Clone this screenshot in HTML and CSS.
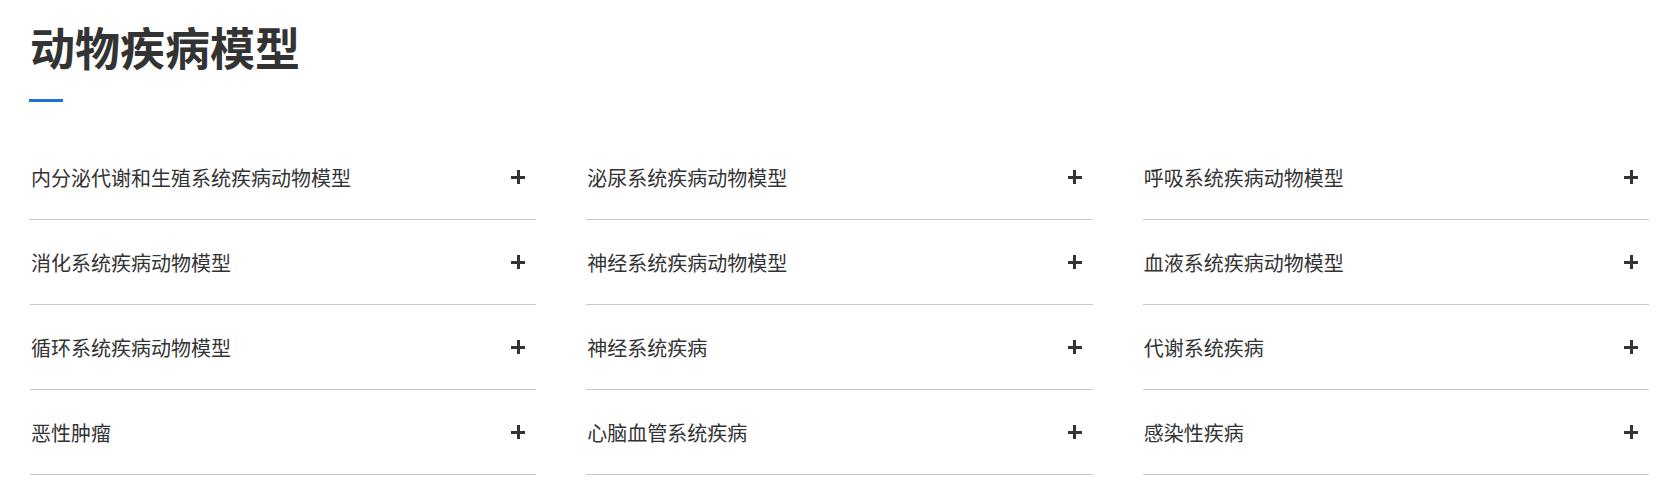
FILE: index.html
```html
<!DOCTYPE HTML>
<html>
	<head>
		<title>动物疾病模型</title>
		<meta charset="utf-8" />
		<meta name="viewport" content="width=device-width, initial-scale=1" />
		<link rel="stylesheet" href="styles.css">
	</head>
	<body>
		<div class="section">
			<h2 class="section-title">动物疾病模型</h2>
			<div class="title-bar"></div>

			<div class="model-list">
				<div class="model-item"><span>内分泌代谢和生殖系统疾病动物模型</span><i class="plus"></i></div>
				<div class="model-item"><span>泌尿系统疾病动物模型</span><i class="plus"></i></div>
				<div class="model-item"><span>呼吸系统疾病动物模型</span><i class="plus"></i></div>

				<div class="model-item"><span>消化系统疾病动物模型</span><i class="plus"></i></div>
				<div class="model-item"><span>神经系统疾病动物模型</span><i class="plus"></i></div>
				<div class="model-item"><span>血液系统疾病动物模型</span><i class="plus"></i></div>

				<div class="model-item"><span>循环系统疾病动物模型</span><i class="plus"></i></div>
				<div class="model-item"><span>神经系统疾病</span><i class="plus"></i></div>
				<div class="model-item"><span>代谢系统疾病</span><i class="plus"></i></div>

				<div class="model-item"><span>恶性肿瘤</span><i class="plus"></i></div>
				<div class="model-item"><span>心脑血管系统疾病</span><i class="plus"></i></div>
				<div class="model-item"><span>感染性疾病</span><i class="plus"></i></div>
			</div>
		</div>
	</body>
</html>
```

FILE: styles.css
```css
body {
	margin: 0;
	padding: 0;
	background: #fff;
	font-family: "Noto Sans CJK SC", "Noto Sans", sans-serif;
	color: #333;
}

.section {
	padding: 17px 20px 0 30px;
}

.section-title {
	margin: 0;
	font-size: 45px;
	font-weight: bold;
	line-height: 60px;
	color: #333;
}

.title-bar {
	width: 34px;
	height: 3px;
	background: #1f72dc;
	margin-top: 22px;
	margin-left: -1px;
}

.model-list {
	display: grid;
	grid-template-columns: repeat(3, 1fr);
	column-gap: 50px;
	margin-top: 33px;
}

.model-item {
	display: flex;
	align-items: center;
	justify-content: space-between;
	height: 84px;
	border-bottom: 1px solid #c8c8c8;
	font-size: 20px;
	color: #333;
	cursor: pointer;
}

.model-item span {
	padding-left: 1px;
}

.plus {
	position: relative;
	width: 14px;
	height: 14px;
	margin-right: 11px;
}

.plus::before,
.plus::after {
	content: '';
	position: absolute;
	background: #333;
}

.plus::before {
	left: 0;
	top: 5.5px;
	width: 14px;
	height: 3px;
}

.plus::after {
	left: 5.5px;
	top: 0;
	width: 3px;
	height: 14px;
}
```
